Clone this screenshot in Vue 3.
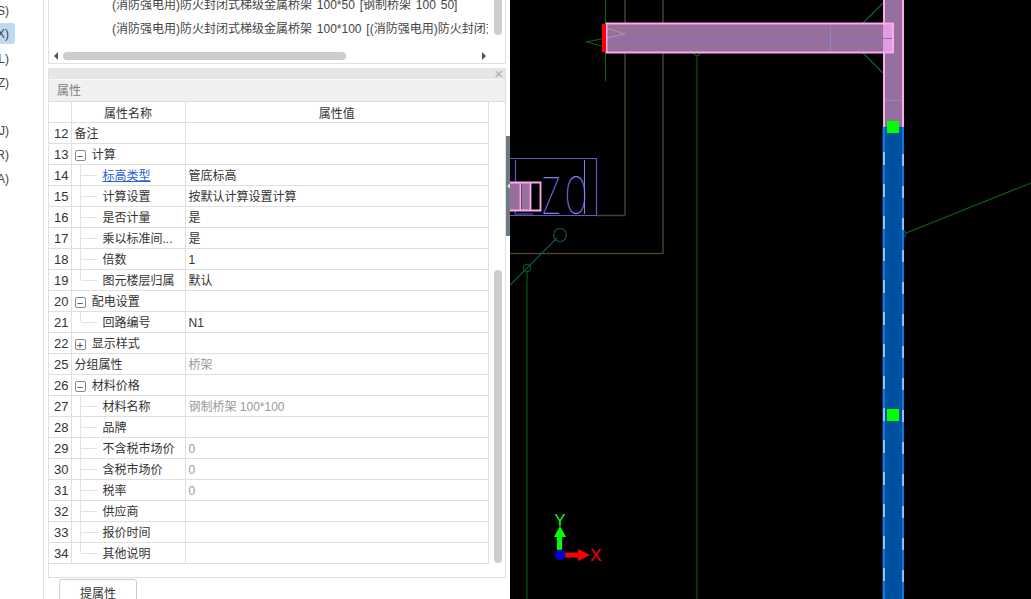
<script setup>
const sideItems = [
  { label: "(S)" },
  { label: "(X)", active: true },
  { label: "(L)" },
  { label: "(Z)" },
  { label: "" },
  { label: "(J)" },
  { label: "(R)" },
  { label: "(A)" },
];

const listRows = [
  "(消防强电用)防火封闭式梯级金属桥架 100*50 [钢制桥架 100 50]",
  "(消防强电用)防火封闭式梯级金属桥架 100*100 [(消防强电用)防火封闭式梯级金属桥架",
];

const rows = [
  { no: 12, name: "备注", value: "" },
  { no: 13, name: "计算", value: "", group: "-" },
  { no: 14, name: "标高类型", value: "管底标高", child: true, link: true },
  { no: 15, name: "计算设置", value: "按默认计算设置计算", child: true },
  { no: 16, name: "是否计量", value: "是", child: true },
  { no: 17, name: "乘以标准间...", value: "是", child: true },
  { no: 18, name: "倍数", value: "1", child: true },
  { no: 19, name: "图元楼层归属", value: "默认", child: true, last: true },
  { no: 20, name: "配电设置", value: "", group: "-" },
  { no: 21, name: "回路编号", value: "N1", child: true, last: true },
  { no: 22, name: "显示样式", value: "", group: "+" },
  { no: 25, name: "分组属性", value: "桥架", muted: true },
  { no: 26, name: "材料价格", value: "", group: "-" },
  { no: 27, name: "材料名称", value: "钢制桥架 100*100", child: true, muted: true },
  { no: 28, name: "品牌", value: "", child: true },
  { no: 29, name: "不含税市场价", value: "0", child: true, muted: true },
  { no: 30, name: "含税市场价", value: "0", child: true, muted: true },
  { no: 31, name: "税率", value: "0", child: true, muted: true },
  { no: 32, name: "供应商", value: "", child: true },
  { no: 33, name: "报价时间", value: "", child: true },
  { no: 34, name: "其他说明", value: "", child: true, last: true },
];

const isLatin = (text) => /^[A-Za-z0-9]+$/.test(text);

const dashes = [152, 184, 216, 248, 280, 312, 344, 376, 408, 440, 472, 504, 536, 568];
</script>

<template>
  <div class="screen">
    <aside class="side">
      <div
        v-for="(item, i) in sideItems"
        :key="i"
        class="side-item"
        :class="{ active: item.active }"
      >
        <span>{{ item.label }}</span>
      </div>
    </aside>

    <main class="panels">
      <section class="list-panel">
        <div class="list-body">
          <div class="list-rows">
            <div v-for="row in listRows" :key="row" class="list-row">{{ row }}</div>
          </div>
          <div class="v-track"><div class="v-thumb"></div></div>
        </div>
        <div class="h-scroll">
          <span class="arrow left"></span>
          <div class="h-track"><div class="h-thumb"></div></div>
          <span class="arrow right"></span>
        </div>
      </section>

      <section class="prop-panel">
        <div class="close-strip"><span class="close">×</span></div>
        <div class="prop-title">属性</div>
        <div class="prop-body">
          <div class="grid-wrap">
            <table class="grid">
              <colgroup>
                <col class="col-no" />
                <col class="col-name" />
                <col />
              </colgroup>
              <thead>
                <tr>
                  <th></th>
                  <th>属性名称</th>
                  <th>属性值</th>
                </tr>
              </thead>
              <tbody>
                <tr v-for="row in rows" :key="row.no">
                  <td class="no">{{ row.no }}</td>
                  <td
                    class="name"
                    :class="{ child: row.child, last: row.last, link: row.link }"
                  >
                    <span v-if="row.group" class="toggle">{{ row.group === "-" ? "−" : "+" }}</span>
                    {{ row.name }}
                  </td>
                  <td class="value" :class="{ muted: row.muted, latin: isLatin(row.value) }">{{ row.value }}</td>
                </tr>
              </tbody>
            </table>
          </div>
          <div class="prop-track"><div class="prop-thumb"></div></div>
        </div>
      </section>

      <div class="actions">
        <button class="btn">提属性</button>
      </div>
    </main>

    <div class="splitter">
      <div class="handle"><span class="handle-arrow"></span></div>
    </div>

    <div class="canvas">
      <svg viewBox="510 0 521 599" width="521" height="599" fill="none">
        <!-- walls -->
        <g stroke="#4c4130" stroke-width="1.4">
          <path d="M625 0V215.5H596" />
          <path d="M663 0V253.5H510" />
        </g>

        <!-- small box with label -->
        <g stroke="#5c5cc0" stroke-width="1.2">
          <path d="M510 158.5H596.5V215.5H510" />
          <path d="M515.5 160V213M514 214H533" />
        </g>
        <path d="M584.5 160V214" stroke="#8080f0" stroke-width="1" />
        <text class="cad-label" transform="translate(541 214) scale(0.66 1)">Z</text>
        <text class="cad-label" transform="translate(564 214) scale(0.8 1)">0</text>

        <rect x="510" y="182" width="10" height="29" fill="#96709a" />
        <rect x="522" y="182" width="8" height="29" fill="#96709a" />
        <path d="M510 182.5H540.5V210.5H510M520.5 182V211M530.5 182V211" stroke="#ffa8f2" stroke-width="1.8" />

        <!-- guide lines -->
        <g stroke="#0a660a" stroke-width="1.1">
          <path d="M605.5 0V81" />
          <path d="M606 38L586 42L606 47" />
          <path d="M697 56V599" />
          <circle cx="697" cy="52" r="3.5" />
          <path d="M527 272V599" />
          <circle cx="527" cy="268" r="3.5" />
          <path d="M905 233.5L1031 183" />
        </g>
        <g stroke="#0d5c58" stroke-width="1.1">
          <path d="M510 285L557 238" />
          <circle cx="560" cy="235" r="6.5" />
          <circle cx="902" cy="234" r="3.5" />
          <path d="M863 23L883 3M863 53L883 73" />
        </g>

        <!-- vertical tray, blue part -->
        <rect x="883" y="127" width="20" height="472" fill="#0050a0" />
        <path d="M882.5 127V599" stroke="#103860" stroke-width="1" />
        <path d="M884 127V599M903 127V599" stroke="#0a78e8" stroke-width="2" />
        <path
          v-for="y in dashes"
          :key="y"
          :d="`M884 ${y}v13M903 ${y + 2}v12`"
          stroke="#8fc2ea"
          stroke-width="2"
        />

        <!-- vertical tray, pink part -->
        <rect x="883" y="0" width="20" height="127" fill="#96709a" />
        <path d="M884 0V127M903 0V127" stroke="#ffa8f2" stroke-width="2" />
        <path d="M893 0V127" stroke="#8a6cc0" stroke-width="1" />
        <path d="M885 100.5H901" stroke="#8f86c8" stroke-width="1" />

        <!-- horizontal tray -->
        <rect x="606" y="23" width="288" height="30" fill="#96709a" />
        <rect x="883" y="24" width="10" height="28" fill="#e49ce0" />
        <path d="M606 38.5H893" stroke="#8a6cc0" stroke-width="1" />
        <path d="M830.5 25V51" stroke="#8f86c8" stroke-width="1" />
        <path d="M606 28L625 34L606 38" stroke="#a89aa0" stroke-width="1" />
        <rect x="606.5" y="23.5" width="286.5" height="29" stroke="#ffa8f2" stroke-width="2" />
        <rect x="602" y="24" width="4" height="28" fill="#ff0000" />

        <!-- grips -->
        <rect x="887" y="121" width="12" height="12" fill="#00ff00" />
        <rect x="887" y="409" width="12" height="12" fill="#00ff00" />

        <!-- axes -->
        <path d="M557 550V537H554L560 526L566 537H562V550Z" fill="#00ff00" />
        <path d="M565 552.5H578V549L590 555L578 561V557.5H565Z" fill="#ff0000" />
        <circle cx="560" cy="555" r="5.5" fill="#0000c8" />
        <text class="axis y" x="560" y="526">Y</text>
        <text class="axis x" x="596" y="561">X</text>
      </svg>
    </div>
  </div>
</template>

<style scoped>
.screen {
  display: flex;
  width: 1031px;
  height: 599px;
  overflow: hidden;
  background: #fff;
  font-family: "Liberation Sans", "Noto Sans CJK SC", sans-serif;
  font-size: 12px;
  color: #333;
}

.side {
  flex: none;
  width: 44px;
  box-sizing: border-box;
  border-right: 1px solid #e0e0e0;
  margin-right: 4px;
}

.side-item {
  width: 15px;
  height: 24px;
  margin-top: -1px;
  margin-bottom: 1px;
  box-sizing: border-box;
  display: flex;
  align-items: center;
  justify-content: flex-end;
  overflow: hidden;
  padding-right: 6px;
  white-space: nowrap;
  color: #444;
  border-radius: 0 3px 3px 0;
}

.side-item.active {
  height: 21px;
  margin-bottom: 4px;
  background: #c0d9f2;
}

.panels {
  flex: none;
  width: 458px;
  display: flex;
  flex-direction: column;
}

.list-panel {
  flex: none;
  height: 64px;
  box-sizing: border-box;
  border: 1px solid #e0e0e0;
  border-top: none;
  display: flex;
  flex-direction: column;
  overflow: hidden;
}

.list-body {
  flex: 1;
  display: flex;
  min-height: 0;
}

.list-rows {
  flex: 1;
  min-width: 0;
  overflow: hidden;
  margin-top: -7px;
  padding-left: 63px;
  margin-right: 6px;
}

.list-row {
  height: 24px;
  line-height: 24px;
  white-space: nowrap;
  word-spacing: 1.5px;
  color: #444;
}

.v-track {
  flex: none;
  width: 8px;
  margin-right: 3px;
}

.v-thumb {
  height: 35px;
  background: #cdcdcd;
  border-radius: 0 0 4px 4px;
}

.h-scroll {
  flex: none;
  height: 11px;
  display: flex;
  align-items: flex-start;
}

.arrow {
  flex: none;
  width: 0;
  height: 0;
  border-top: 4px solid transparent;
  border-bottom: 4px solid transparent;
}

.arrow.left {
  margin-left: 5px;
  border-right: 4px solid #4a5460;
}

.arrow.right {
  border-left: 4px solid #4a5460;
}

.h-track {
  width: 411px;
  margin-left: 5px;
  margin-right: 8px;
}

.h-thumb {
  width: 283px;
  height: 8px;
  background: #cdcdcd;
  border-radius: 4px;
}

.prop-panel {
  flex: none;
  height: 510px;
  margin-top: 4px;
  box-sizing: border-box;
  border: 1px solid #e0e0e0;
  border-top: none;
  display: flex;
  flex-direction: column;
}

.close-strip {
  flex: none;
  height: 11px;
  background: #e6e6e6;
  border-bottom: 1px solid #f8f8f8;
  display: flex;
  justify-content: flex-end;
  align-items: center;
}

.close {
  font-size: 15px;
  line-height: 12px;
  color: #aaa;
  margin-right: 2px;
}

.prop-title {
  flex: none;
  height: 21px;
  line-height: 23px;
  padding-left: 8px;
  background: #f0f0f0;
  border-bottom: 1px solid #e0e0e0;
  color: #808080;
}

.prop-body {
  flex: 1;
  display: flex;
  min-height: 0;
}

.grid-wrap {
  flex: none;
  width: 440px;
}

.grid {
  width: 100%;
  table-layout: fixed;
  border-collapse: collapse;
}

.col-no {
  width: 22px;
}

.col-name {
  width: 114px;
}

.grid th,
.grid td {
  height: 20px;
  padding: 0;
  border: 1px solid #e0e0e0;
  border-top: none;
  border-left: none;
  font-weight: 400;
  white-space: nowrap;
  overflow: hidden;
  color: #333;
}

.grid th {
  text-align: center;
}

.grid .no {
  text-align: right;
  padding-right: 2px;
  font-size: 13px;
}

.grid .name {
  height: 18px;
  padding: 0 0 2px 3px;
}

.grid .name.child {
  padding-left: 31px;
  background:
    linear-gradient(#e2e2e2, #e2e2e2) 8px 0 / 1px 100% no-repeat,
    linear-gradient(#e2e2e2, #e2e2e2) 9px 10px / 16px 1px no-repeat;
}

.grid .name.child.last {
  background:
    linear-gradient(#e2e2e2, #e2e2e2) 8px 0 / 1px 10px no-repeat,
    linear-gradient(#e2e2e2, #e2e2e2) 9px 10px / 16px 1px no-repeat;
}

.grid .name.link {
  color: #2a5fd8;
  text-decoration: underline;
}

.grid .value {
  height: 18px;
  padding: 0 0 2px 3px;
}

.grid .value.latin {
  padding: 2px 0 0 3px;
}

.grid .value.muted {
  color: #999;
}

.toggle {
  display: inline-block;
  width: 11px;
  height: 11px;
  line-height: 10px;
  margin-right: 3px;
  box-sizing: border-box;
  border: 1px solid #888;
  border-radius: 2px;
  text-align: center;
  font-size: 11px;
  color: #444;
  vertical-align: -1px;
}

.prop-track {
  flex: none;
  width: 8px;
  margin-left: 5px;
  padding-top: 168px;
}

.prop-thumb {
  height: 293px;
  background: #cdcdcd;
  border-radius: 4px;
}

.actions {
  flex: none;
  padding: 1px 0 0 11px;
}

.btn {
  width: 78px;
  height: 30px;
  padding: 0 0 4px;
  box-sizing: border-box;
  background: #fff;
  border: 1px solid #ccc;
  border-radius: 3px;
  font: inherit;
  color: #333;
}

.splitter {
  flex: none;
  width: 4px;
  padding-top: 136px;
  box-sizing: border-box;
}

.handle {
  width: 4px;
  height: 100px;
  background: #6d7a85;
  position: relative;
}

.handle-arrow {
  position: absolute;
  left: 1px;
  top: 47px;
  width: 0;
  height: 0;
  border-top: 3px solid transparent;
  border-bottom: 3px solid transparent;
  border-right: 3px solid #d8d8d8;
}

.canvas {
  flex: 1;
  background: #000;
  min-width: 0;
}

.canvas svg {
  display: block;
}

.cad-label {
  font-family: Inter, Roboto, sans-serif;
  font-weight: 100;
  font-size: 51px;
  fill: #8080f0;
}

.axis {
  font-family: "Liberation Sans", sans-serif;
  font-size: 17px;
  text-anchor: middle;
}

.axis.y {
  fill: #00ff00;
}

.axis.x {
  fill: #ff0000;
}
</style>
